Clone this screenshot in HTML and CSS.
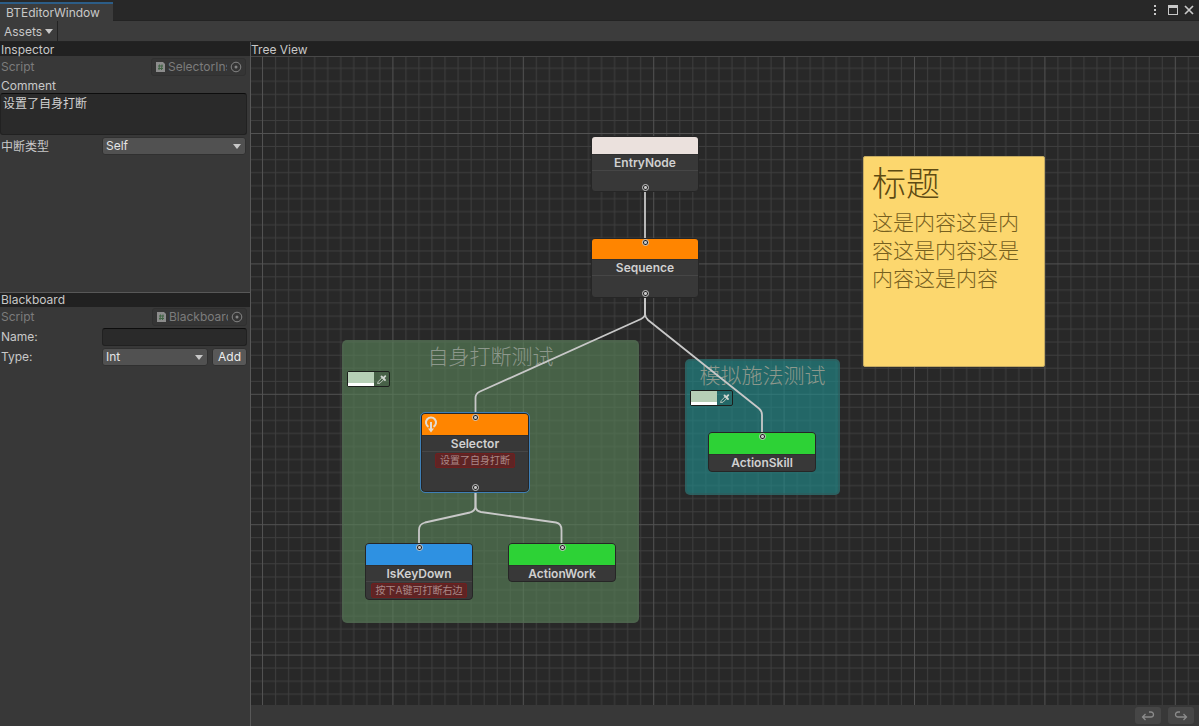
FILE: index.html
```html
<!DOCTYPE html>
<html lang="zh-CN">
<head>
<meta charset="utf-8">
<title>BTEditorWindow</title>
<link rel="stylesheet" href="styles.css">
</head>
<body>
<div class="window">
  <header class="tabbar">
    <div class="tab">BTEditorWindow</div>
    <div class="window-actions">
      <button class="icon-btn" aria-label="Menu"><svg width="12" height="12" viewBox="0 0 12 12"><path d="M5 1h2v2H5zM5 5h2v2H5zM5 9h2v2H5z" fill="#c8c8c8"/></svg></button>
      <button class="icon-btn" aria-label="Maximize"><svg width="12" height="12" viewBox="0 0 12 12"><path d="M1 1h10v10H1zM2 4v6h8V4z" fill="#c8c8c8" fill-rule="evenodd"/></svg></button>
      <button class="icon-btn" aria-label="Close"><svg width="12" height="12" viewBox="0 0 12 12"><path d="M2 2l8 8M10 2l-8 8" stroke="#c8c8c8" stroke-width="1.700"/></svg></button>
    </div>
  </header>
  <nav class="toolbar">
    <button class="menu-btn">Assets<svg width="8" height="5" viewBox="0 0 8 5"><path d="M0 0h8L4 5z" fill="#c8c8c8"/></svg></button>
  </nav>
  <div class="split">
    <aside class="side">
      <section class="panel inspector">
        <h2 class="panel-title">Inspector</h2>
        <div class="row">
          <span class="label dim">Script</span>
          <div class="object-field">
            <svg class="script-icon" width="9" height="10" viewBox="0 0 9 10"><path d="M0 0h7l2 2v8H0z" fill="#8c8c8c"/><path d="M3.500 2.500L3 8M6 2.500L5.500 8M2 4h5M2 6.500h5" stroke="#3f6343" stroke-width="1"/></svg>
            <span class="object-name">SelectorInspector</span>
            <button class="picker" aria-label="Select script"><svg width="12" height="12" viewBox="0 0 12 12"><circle cx="6" cy="6" r="4.800" fill="none" stroke="#858585"/><circle cx="6" cy="6" r="1.500" fill="#858585"/></svg></button>
          </div>
        </div>
        <label class="label block" for="comment">Comment</label>
        <textarea class="comment" id="comment">设置了自身打断</textarea>
        <div class="row">
          <label class="label" for="abort">中断类型</label>
          <div class="select-wrap">
            <select class="select" id="abort"><option>Self</option></select>
            <svg class="arrow" width="8" height="5" viewBox="0 0 8 5"><path d="M0 0h8L4 5z" fill="#c8c8c8"/></svg>
          </div>
        </div>
      </section>
      <section class="panel blackboard">
        <h2 class="panel-title">Blackboard</h2>
        <div class="row">
          <span class="label dim">Script</span>
          <div class="object-field">
            <svg class="script-icon" width="9" height="10" viewBox="0 0 9 10"><path d="M0 0h7l2 2v8H0z" fill="#8c8c8c"/><path d="M3.500 2.500L3 8M6 2.500L5.500 8M2 4h5M2 6.500h5" stroke="#3f6343" stroke-width="1"/></svg>
            <span class="object-name">BlackboardInspector</span>
            <button class="picker" aria-label="Select script"><svg width="12" height="12" viewBox="0 0 12 12"><circle cx="6" cy="6" r="4.800" fill="none" stroke="#858585"/><circle cx="6" cy="6" r="1.500" fill="#858585"/></svg></button>
          </div>
        </div>
        <div class="row">
          <label class="label" for="name">Name:</label>
          <input class="text-input" id="name" type="text">
        </div>
        <div class="row">
          <label class="label" for="type">Type:</label>
          <div class="select-wrap">
            <select class="select" id="type"><option>Int</option></select>
            <svg class="arrow" width="8" height="5" viewBox="0 0 8 5"><path d="M0 0h8L4 5z" fill="#c8c8c8"/></svg>
          </div>
          <button class="add-btn">Add</button>
        </div>
      </section>
    </aside>
    <main class="tree">
      <h2 class="panel-title">Tree View</h2>
      <div class="canvas">
        <svg class="layer" width="100%" height="100%">
          <defs>
            <pattern id="grid" width="130.4" height="130.4" patternUnits="userSpaceOnUse" x="11" y="76">
              <path d="M13.540 0v131M26.580 0v131M39.620 0v131M52.660 0v131M65.700 0v131M78.740 0v131M91.780 0v131M104.820 0v131M117.860 0v131M0 13.540h131M0 26.580h131M0 39.620h131M0 52.660h131M0 65.700h131M0 78.740h131M0 91.780h131M0 104.820h131M0 117.860h131" stroke="#3e3e3e" stroke-width="1"/>
              <path d="M.5 0v131M0 .5h131" stroke="#525252" stroke-width="1"/>
            </pattern>
          </defs>
          <rect width="100%" height="100%" fill="url(#grid)"/>
        </svg>

        <section class="group green">
          <h3 class="group-title">自身打断测试</h3>
          <div class="color-field"><span class="swatch"></span><svg width="15" height="13" viewBox="0 0 15 13"><path d="M3.500 10.500l.8-2L8.500 4.300l1.700 1.700L6 10.200z" fill="none" stroke="#b9c4b9"/><path d="M7.500 3.500L11 7M9.300 5.200L11.300 3.200" stroke="#d0d6d0" stroke-width="1.800" stroke-linecap="round"/></svg></div>
        </section>
        <section class="group teal">
          <h3 class="group-title">模拟施法测试</h3>
          <div class="color-field"><span class="swatch"></span><svg width="15" height="13" viewBox="0 0 15 13"><path d="M3.500 10.500l.8-2L8.500 4.300l1.700 1.700L6 10.200z" fill="none" stroke="#b9c4b9"/><path d="M7.500 3.500L11 7M9.300 5.200L11.300 3.200" stroke="#d0d6d0" stroke-width="1.800" stroke-linecap="round"/></svg></div>
        </section>

        <svg class="layer" width="100%" height="100%">
          <g transform="translate(-251 -57)" fill="none" stroke="#c8c8c8" stroke-width="1.800" stroke-linejoin="round">
            <path d="M645 188V242"/>
            <path d="M645 293V314Q645 317 641 319L480 391.500Q475.500 393.500 475.500 398V418"/>
            <path d="M645 293V314Q645 317 648 320L759 408.500Q762 411 762 415V437"/>
            <path d="M475.500 487V506Q475.500 511 470 512.500L425 522.500Q419 524 419 530V547"/>
            <path d="M475.500 487V506Q475.500 511 481 512L556 522.500Q561.500 523.500 561.500 530V547"/>
          </g>
        </svg>

        <article class="node entry"><div class="bar"></div><div class="name">EntryNode</div><div class="body"></div><i class="port out"></i></article>
        <article class="node sequence"><div class="bar"></div><div class="name">Sequence</div><div class="body"></div><i class="port in"></i><i class="port out"></i></article>
        <article class="node selector"><div class="bar"><svg width="14" height="17" viewBox="0 0 14 17"><path d="M4.500 10.800A5 5 0 1 1 9.500 10.800M7 6v9" fill="none" stroke="#e3dcd3" stroke-width="2"/><path d="M4 12.500h6L7 16.500z" fill="#e3dcd3"/></svg></div><div class="name">Selector</div><div class="body"><span class="note">设置了自身打断</span></div><i class="port in"></i><i class="port out"></i></article>
        <article class="node keydown"><div class="bar"></div><div class="name">IsKeyDown</div><div class="body"><span class="note">按下A键可打断右边</span></div><i class="port in"></i></article>
        <article class="node work"><div class="bar"></div><div class="name">ActionWork</div><i class="port in"></i></article>
        <article class="node skill"><div class="bar"></div><div class="name">ActionSkill</div><i class="port in"></i></article>

        <section class="sticky">
          <h3 class="sticky-title">标题</h3>
          <p class="sticky-text">这是内容这是内容这是内容这是内容这是内容</p>
        </section>
      </div>
      <footer class="footer">
        <button class="history" aria-label="Undo"><svg width="14" height="12" viewBox="0 0 14 12"><path d="M4.500 4L1.500 7l3 3M1.500 7H10a2.500 2.500 0 0 0 0-5H8" fill="none" stroke="#8b8b8b" stroke-width="1.300"/></svg></button>
        <button class="history" aria-label="Redo"><svg width="14" height="12" viewBox="0 0 14 12"><path d="M9.500 4l3 3-3 3M12.500 7H4a2.500 2.500 0 0 1 0-5h2" fill="none" stroke="#8b8b8b" stroke-width="1.300"/></svg></button>
      </footer>
    </main>
  </div>
</div>
</body>
</html>
```

FILE: styles.css
```css
* { box-sizing: border-box; margin: 0; }
html, body { height: 100%; }
body {
  background: #383838;
  color: #c8c8c8;
  font: 12px/14px Inter, "Noto Sans CJK SC", sans-serif;
  overflow: hidden;
}
button, select, input, textarea { font: inherit; color: inherit; }
button { padding: 0; border: 0; background: none; }
svg { display: block; flex: none; }

.window { display: flex; flex-direction: column; height: 100vh; }

.tabbar {
  display: flex;
  justify-content: space-between;
  height: 21px;
  background: #282828;
  border-bottom: 1px solid #232323;
}
.tab {
  height: 19px;
  margin-top: 2px;
  padding: 2px 13px 0 6px;
  background: #3c3c3c;
  border-top: 2px solid #2c5d87;
}
.window-actions { display: flex; align-items: center; gap: 4px; padding-right: 4px; }
.icon-btn:first-child { margin-right: 2px; }

.toolbar { display: flex; height: 21px; background: #3c3c3c; border-bottom: 1px solid #232323; }
.menu-btn {
  display: flex;
  align-items: center;
  gap: 3px;
  padding: 1px 4px 0;
  border-right: 1px solid #232323;
}

.split { flex: 1; display: flex; min-height: 0; }
.side { display: flex; flex-direction: column; width: 251px; border-right: 1px solid #585858; }
.panel-title {
  height: 14px;
  padding-left: 1px;
  background: #212121;
  font-size: 12px;
  line-height: 16px;
  font-weight: 400;
}
.tree .panel-title { padding-left: 0; }
.inspector { height: 250px; }
.inspector .panel-title { margin-bottom: 1px; }
.blackboard { flex: 1; border-top: 1px solid #585858; }
.blackboard .panel-title { line-height: 14px; }
.row { display: flex; align-items: center; height: 20px; padding-right: 4px; }
.label { width: 102px; padding-left: 1px; }
.label.block { display: block; height: 16px; padding-top: 2px; }
.dim { color: #7c7c7c; }

.object-field {
  display: flex;
  align-items: center;
  gap: 3px;
  width: 95px;
  height: 18px;
  margin-left: auto;
  padding: 0 3px 0 4px;
  border: 1px solid #303030;
  border-radius: 3px;
  background: #353535;
  color: #7c7c7c;
}
.object-name { flex: 1; min-width: 0; overflow: hidden; white-space: nowrap; }

.comment {
  display: block;
  width: 247px;
  height: 42px;
  padding: 3px 2px;
  border: 1px solid #212121;
  border-top-color: #0d0d0d;
  border-radius: 3px;
  background: #2a2a2a;
  color: #d2d2d2;
  resize: none;
}
.comment + .row { margin-top: 1px; }
.comment + .row .label { padding-top: 2px; }
.select-wrap { position: relative; flex: 1; }
.select {
  appearance: none;
  display: block;
  width: 100%;
  height: 18px;
  padding: 0 3px;
  border: 1px solid #303030;
  border-radius: 3px;
  background: #515151;
  color: #e4e4e4;
}
.arrow { position: absolute; right: 5px; top: 7px; pointer-events: none; }
.text-input {
  flex: 1;
  min-width: 0;
  height: 18px;
  border: 1px solid #212121;
  border-top-color: #0d0d0d;
  border-radius: 3px;
  background: #2a2a2a;
}
.blackboard .row { padding-right: 3px; }
.add-btn {
  width: 35px;
  height: 18px;
  margin-left: 4px;
  border: 1px solid #303030;
  border-radius: 3px;
  background: #585858;
  color: #eee;
}

.tree { flex: 1; display: flex; flex-direction: column; min-width: 0; }
.canvas { position: relative; flex: 1; overflow: hidden; background: #282828; border-top: 1px solid #484848; }
.layer { position: absolute; inset: 0; }
.footer {
  display: flex;
  align-items: center;
  justify-content: flex-end;
  gap: 7px;
  height: 21px;
  padding-right: 5px;
  background: #383838;
}
.history {
  display: flex;
  align-items: center;
  justify-content: center;
  width: 26px;
  height: 17px;
  border-radius: 3px;
  background: #464646;
}

.group { position: absolute; border: 2px solid; border-radius: 5px; }
.group-title {
  height: 28px;
  font-size: 21px;
  line-height: 30px;
  font-weight: 300;
  text-align: center;
  color: #8d988c;
}
.green { left: 91px; top: 283px; width: 297px; height: 283px; background: rgba(88, 128, 88, .66); border-color: rgba(80, 100, 80, .5); }
.teal { left: 434px; top: 302px; width: 155px; height: 136px; background: rgba(34, 136, 136, .66); border-color: rgba(50, 90, 90, .5); }
.color-field {
  display: flex;
  align-items: center;
  width: 43px;
  height: 16px;
  margin: 1px 0 0 3px;
  border: 1px solid #1c1f1c;
  border-radius: 2px;
}
.swatch { width: 26px; height: 14px; background: #b6cfb6; border-bottom: 3px solid #fff; }

.node {
  position: absolute;
  width: 108px;
  border: 1px solid #262626;
  border-radius: 4px;
  background: #383838;
}
.bar { height: 22px; border-bottom: 1px solid #303030; border-radius: 3px 3px 0 0; }
.name { height: 15px; font-weight: 600; line-height: 16px; text-align: center; color: #d0d0d0; }
.body { border-top: 1px solid #464646; text-align: center; }
.note {
  display: inline-block;
  height: 15px;
  margin-top: 1px;
  padding: 0 4px;
  border: 1px solid #701f1f;
  border-radius: 2px;
  background: #5f2424;
  color: #a88;
  font-size: 10px;
  line-height: 13px;
  vertical-align: top;
}
.port {
  position: absolute;
  left: 50%;
  width: 7px;
  height: 7px;
  margin-left: -3px;
  border: 1px solid #c8c8c8;
  border-radius: 50%;
  background: radial-gradient(circle, #c8c8c8 1px, #212121 2px);
}
.port.in { top: 0; }
.port.out { bottom: 0; }

.entry { left: 340px; top: 79px; height: 56px; }
.entry .bar { height: 18px; background: #ebe1dd; }
.sequence { left: 340px; top: 181px; height: 60px; }
.sequence .bar, .selector .bar { background: #ff8500; }
.sequence .bar { height: 21px; }
.selector { left: 170px; top: 356px; height: 79px; outline: 1px solid #3f7fb5; }
.selector .bar { padding: 2px 0 0 2px; }
.keydown { left: 114px; top: 486px; height: 57px; }
.keydown .bar { background: #2e91e2; }
.work { left: 257px; top: 486px; height: 39px; }
.work .bar, .skill .bar { background: #2dd236; }
.skill { left: 457px; top: 375px; height: 40px; }

.sticky {
  position: absolute;
  left: 612px;
  top: 99px;
  width: 182px;
  height: 211px;
  padding: 7px 8px;
  border: 1px solid #c5ab62;
  border-radius: 2px;
  background: #fcd76e;
  color: #5d4a12;
}
.sticky-title { font-size: 34px; line-height: 40px; font-weight: 300; }
.sticky-text { margin-top: 5px; padding-right: 12px; font-size: 21px; line-height: 28px; font-weight: 300; color: #76601f; }
```
